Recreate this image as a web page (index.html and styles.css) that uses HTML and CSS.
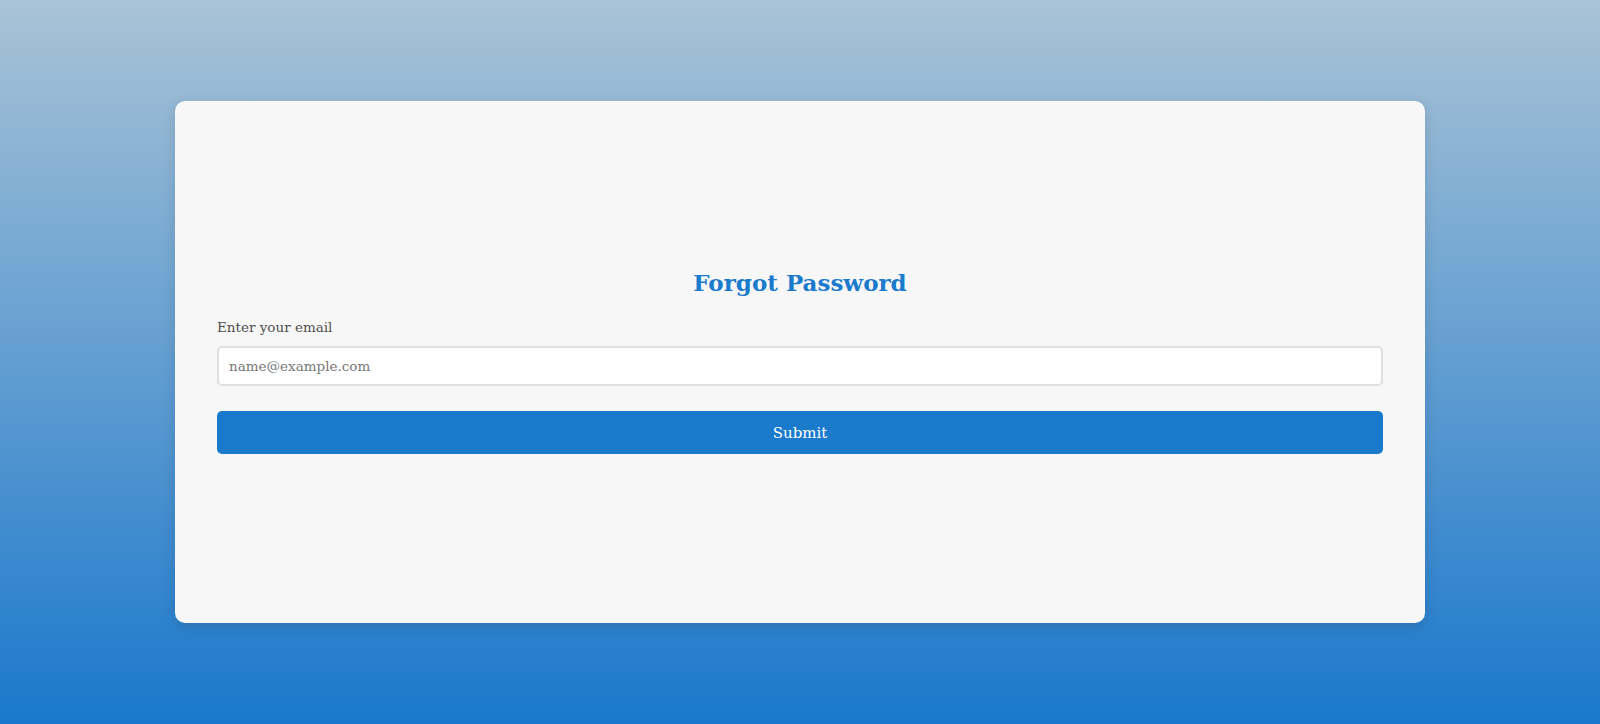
FILE: index.html
```html
<!DOCTYPE html>
<html lang="en">
<head>
<meta charset="utf-8">
<title>Forgot Password</title>
<link rel="stylesheet" href="styles.css">
</head>
<body>
<main class="page">
  <section class="card">
    <h1 class="title">Forgot Password</h1>
    <form class="form">
      <label class="label" for="email">Enter your email</label>
      <input class="input" id="email" type="email" placeholder="name@example.com">
      <button class="button" type="button">Submit</button>
    </form>
  </section>
</main>
</body>
</html>
```
FILE: styles.css
```css
html, body {
  margin: 0;
  padding: 0;
  height: 100%;
}
body {
  background: linear-gradient(to bottom, #a9c3d6 0%, #1a78cc 100%);
  font-family: "DejaVu Serif", "Liberation Serif", serif;
}
.page {
  height: 100vh;
  display: flex;
  align-items: center;
  justify-content: center;
}
.card {
  box-sizing: border-box;
  width: 1250px;
  height: 522px;
  background: #f7f7f7;
  border-radius: 10px;
  box-shadow: 0 4px 14px rgba(0, 0, 0, 0.12);
  padding: 0 42px;
  display: flex;
  flex-direction: column;
  justify-content: center;
}
.title {
  margin: 0 0 21px;
  text-align: center;
  color: #1a7acc;
  font-size: 23px;
  line-height: 26px;
  font-weight: bold;
}
.form {
  display: flex;
  flex-direction: column;
}
.label {
  color: #505050;
  font-size: 13.5px;
  line-height: 20px;
  margin-bottom: 9px;
}
.input {
  box-sizing: border-box;
  height: 40px;
  border: 2px solid #e0e0e0;
  border-radius: 5px;
  background: #fff;
  padding: 0 10px;
  font-family: inherit;
  font-size: 13.5px;
  color: #333;
  outline: none;
}
.input::placeholder {
  color: #777;
}
.button {
  margin-top: 25px;
  height: 43px;
  border: none;
  border-radius: 5px;
  background: #1a7acc;
  color: #fff;
  font-family: inherit;
  font-size: 15px;
  cursor: pointer;
}
```
